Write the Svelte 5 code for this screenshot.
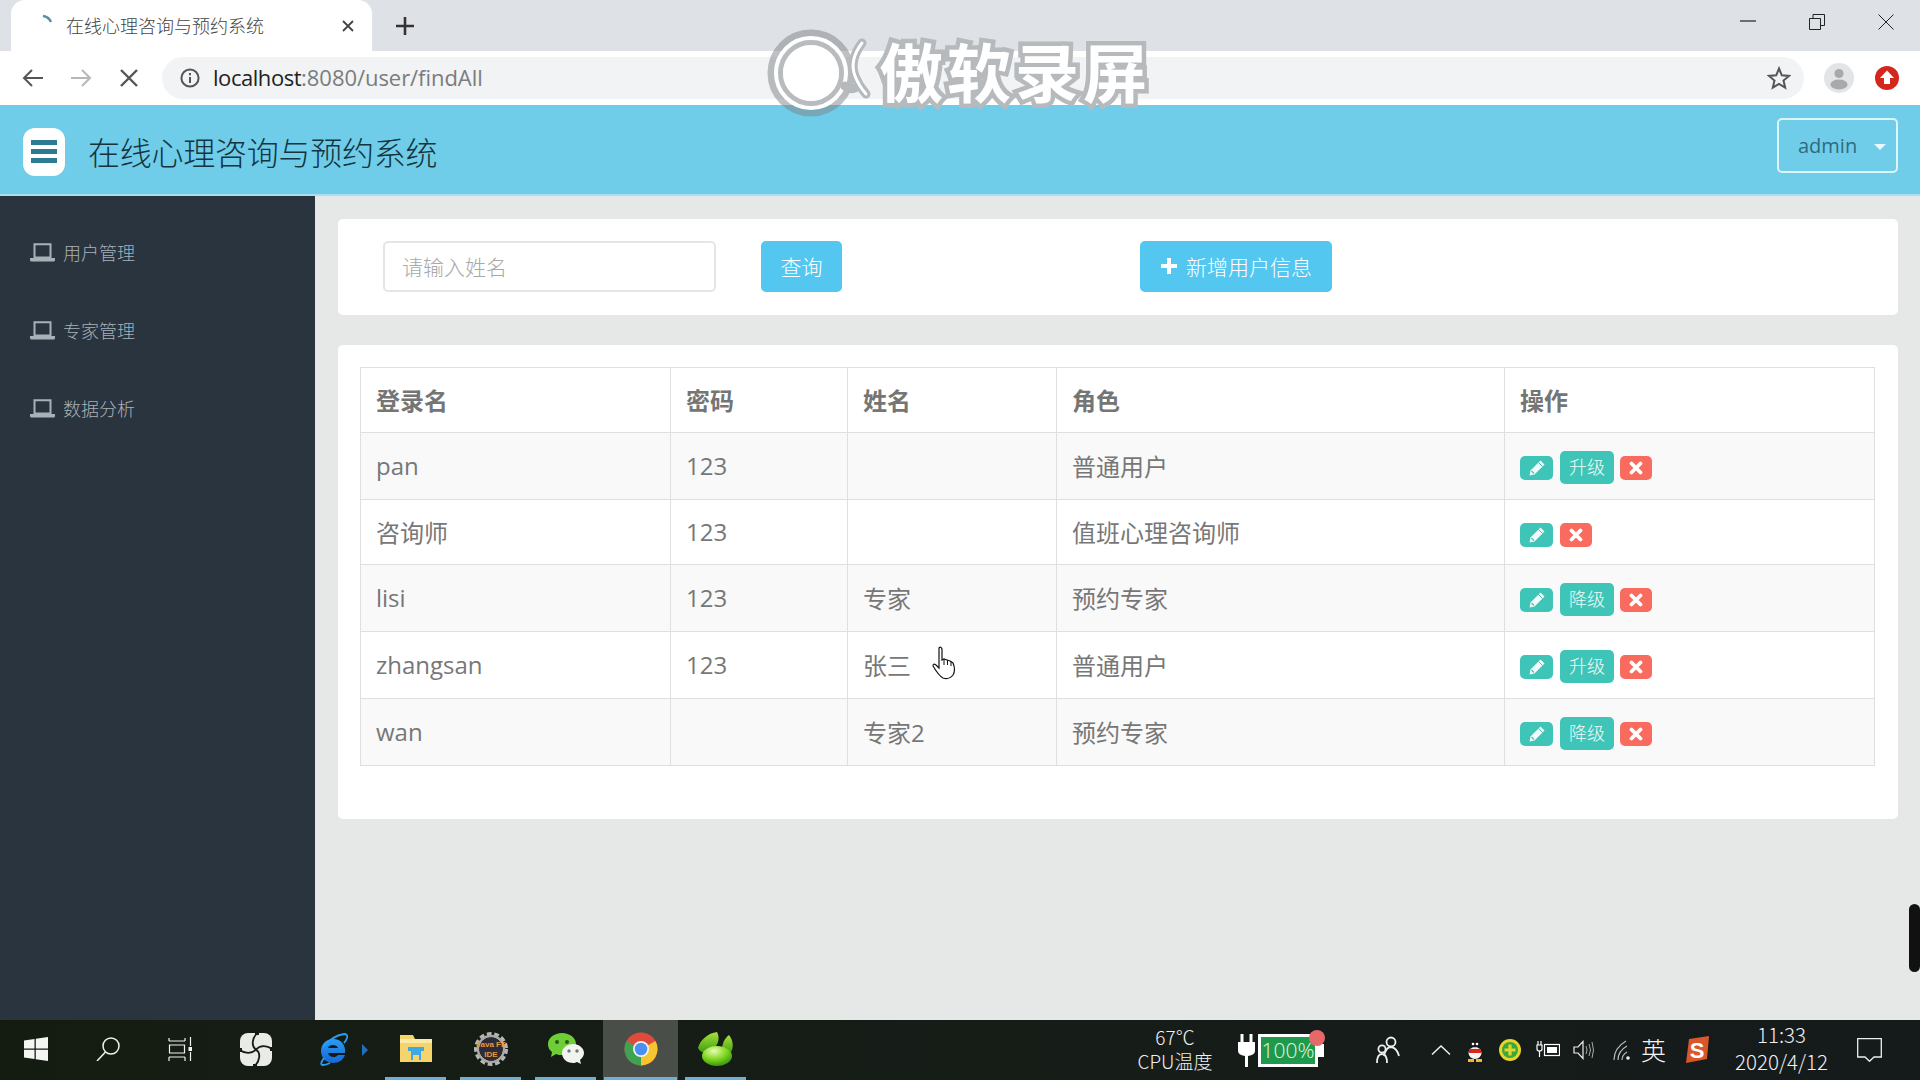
<script>
  const menu = ['用户管理', '专家管理', '数据分析'];
  const rows = [
    { login: 'pan', pwd: '123', name: '', role: '普通用户', action: '升级', tall: true },
    { login: '咨询师', pwd: '123', name: '', role: '值班心理咨询师', action: '', tall: false },
    { login: 'lisi', pwd: '123', name: '专家', role: '预约专家', action: '降级', tall: true },
    { login: 'zhangsan', pwd: '123', name: '张三', role: '普通用户', action: '升级', tall: true },
    { login: 'wan', pwd: '', name: '专家2', role: '预约专家', action: '降级', tall: true }
  ];
</script>

<div class="screen">
  <div class="tabbar">
    <div class="tab">
      <svg class="spin" width="18" height="18" viewBox="0 0 18 18"><path d="M3 2 A10 10 0 0 1 11 8" fill="none" stroke="#5a8f9c" stroke-width="2.4"/></svg>
      <span class="tabtitle">在线心理咨询与预约系统</span>
      <svg class="tabx" width="14" height="14" viewBox="0 0 14 14"><path d="M2 2L12 12M12 2L2 12" stroke="#444" stroke-width="1.8"/></svg>
    </div>
    <svg class="plus" width="20" height="20" viewBox="0 0 20 20"><path d="M10 1V19M1 10H19" stroke="#333" stroke-width="2.6"/></svg>
    <div class="winctl">
      <svg width="16" height="16" viewBox="0 0 16 16"><path d="M0 7H16" stroke="#222" stroke-width="1.2"/></svg>
      <svg width="16" height="16" viewBox="0 0 16 16"><path d="M.5 4.5H11.5V15.5H.5ZM4 4.5V.5H15.5V11.5H11.5" fill="none" stroke="#222" stroke-width="1"/></svg>
      <svg width="16" height="16" viewBox="0 0 16 16"><path d="M.5 .5L15.5 15.5M15.5 .5L.5 15.5" stroke="#222" stroke-width="1"/></svg>
    </div>
  </div>

  <div class="toolbar">
    <svg class="nav" width="22" height="20" viewBox="0 0 22 20"><path d="M21 10H2M10 2L2 10L10 18" fill="none" stroke="#555" stroke-width="2"/></svg>
    <svg class="nav" width="22" height="20" viewBox="0 0 22 20"><path d="M1 10H20M12 2L20 10L12 18" fill="none" stroke="#b5b7ba" stroke-width="2"/></svg>
    <svg class="nav" width="20" height="20" viewBox="0 0 20 20"><path d="M2 2L18 18M18 2L2 18" stroke="#555" stroke-width="2.4"/></svg>
    <div class="omni">
      <svg width="20" height="20" viewBox="0 0 20 20"><circle cx="10" cy="10" r="8.6" fill="none" stroke="#555" stroke-width="2"/><path d="M10 9V15M10 5V7.2" stroke="#555" stroke-width="2"/></svg>
      <span class="url"><b>localhost</b>:8080/user/findAll</span>
      <svg class="star" width="24" height="24" viewBox="0 0 24 24"><path d="M12 2.5L14.8 9.3L22 9.9L16.5 14.6L18.2 21.6L12 17.9L5.8 21.6L7.5 14.6L2 9.9L9.2 9.3Z" fill="none" stroke="#555" stroke-width="2"/></svg>
    </div>
    <svg class="avatar" width="30" height="30" viewBox="0 0 30 30"><circle cx="15" cy="15" r="15" fill="#e3e4e6"/><circle cx="15" cy="10.5" r="4.6" fill="#a8a9ab"/><ellipse cx="15" cy="21.5" rx="8.5" ry="5" fill="#a8a9ab"/></svg>
    <svg class="update" width="24" height="24" viewBox="0 0 24 24"><circle cx="12" cy="12" r="12" fill="#d5261e"/><path d="M12 4.5L19 12H15V18H9V12H5Z" fill="#fff"/></svg>
  </div>

  <header class="header">
    <div class="burger"><i></i><i></i><i></i></div>
    <h1>在线心理咨询与预约系统</h1>
    <div class="admin"><span>admin</span><em></em></div>
  </header>

  <div class="body">
    <aside class="side">
      {#each menu as m}
        <div class="mi">
          <svg width="25" height="22" viewBox="0 0 25 22"><path d="M4.5 3.2H20.5V16.5H4.5Z" fill="none" stroke="#a9b1b8" stroke-width="2"/><path d="M0 17H25V19Q25 20.5 23.500 20.500H1.500Q0 20.500 0 19Z" fill="#a9b1b8"/></svg>
          <span>{m}</span>
        </div>
      {/each}
    </aside>
    <main class="main">
      <section class="card search">
        <div class="input">请输入姓名</div>
        <button class="b query">查询</button>
        <button class="b add"><svg width="18" height="18" viewBox="0 0 18 18"><path d="M9 1V17M1 9H17" stroke="#fff" stroke-width="4"/></svg>新增用户信息</button>
      </section>
      <section class="card list">
        <table>
          <colgroup><col class="c1"/><col class="c2"/><col class="c3"/><col class="c4"/><col class="c5"/></colgroup>
          <thead><tr><th>登录名</th><th>密码</th><th>姓名</th><th>角色</th><th>操作</th></tr></thead>
          <tbody>
            {#each rows as r}
              <tr class:tall={r.tall}>
                <td>{r.login}</td><td>{r.pwd}</td><td>{r.name}</td><td>{r.role}</td>
                <td class="opcell">
                  <div class="ops">
                    <span class="op edit"><svg width="18" height="18" viewBox="0 0 18 18"><path d="M12.500 1.500L16.500 5.500L6.500 15.500L1.500 16.500L2.500 11.500Z" fill="#f2fbfa"/><path d="M3.500 12L6 14.500" stroke="#3fc5b8" stroke-width="1.200"/><path d="M10.500 3.500L14.500 7.500" stroke="#3fc5b8" stroke-width="1"/></svg></span>
                    {#if r.action}<span class="op act">{r.action}</span>{/if}
                    <span class="op del"><svg width="14" height="14" viewBox="0 0 14 14"><path d="M2.500 2.500L11.500 11.500M11.500 2.500L2.500 11.500" stroke="#fff" stroke-width="3.800" stroke-linecap="round"/></svg></span>
                  </div>
                </td>
              </tr>
            {/each}
          </tbody>
        </table>
      </section>
    </main>
  </div>

  <footer class="taskbar">
    <div class="tb-left">
      <div class="slot s72"><svg width="24" height="24" viewBox="0 0 24 24"><path d="M0 3.500L10.500 2V11.500H0ZM11.800 1.800L24 0V11.500H11.800ZM0 12.700H10.500V22L0 20.500ZM11.800 12.700H24V24L11.800 22.200Z" fill="#f4f6f4"/></svg></div>
      <div class="slot s72"><svg width="24" height="24" viewBox="0 0 24 24"><circle cx="15" cy="9" r="8" fill="none" stroke="#f0f2f0" stroke-width="1.500"/><path d="M9.500 15L1 24" stroke="#f0f2f0" stroke-width="1.500"/></svg></div>
      <div class="slot s72"><svg width="24" height="24" viewBox="0 0 24 24"><path d="M1 4H17M1 1V4M17 1V4M1 20H17M1 20V24M17 20V24M1.500 8H16.500V16H1.500ZM22.500 0V9M22.500 15V24" fill="none" stroke="#f0f2f0" stroke-width="1.200"/><rect x="20.500" y="10" width="4" height="4" fill="#f0f2f0"/></svg></div>
      <div class="slot s80"><svg width="32" height="33" viewBox="0 0 32 33"><rect x="0" y="0" width="32" height="33" rx="8" fill="#e8ebe6"/><path d="M16 16.500C11 13 12 6 17 0M16 16.500C20 12 27 12 32 16M16 16.500C21 20 20 27 15 33M16 16.500C12 21 5 21 0 17" fill="none" stroke="#141c14" stroke-width="1.800"/><path d="M15 0H19V2H15ZM0 15H2V19H0ZM30 14H32V18H30ZM13 31H17V33H13Z" fill="#141c14"/></svg></div>
      <div class="slot s82">
        <svg class="ie" width="30" height="34" viewBox="0 0 30 34"><defs><linearGradient id="ieg" x1="0" y1="0" x2="0" y2="1"><stop offset="0" stop-color="#2b9cf4"/><stop offset="1" stop-color="#1468d8"/></linearGradient></defs><path d="M15 7C8 7 3 12 3 19C3 26 8 31 15 31C21 31 25 28 27 23H20C18 26 11 26 10 21H27C28 13 23 7 15 7ZM10 16C11 12 19 12 20 16Z" fill="url(#ieg)"/><path d="M5 15Q14 4 26 2Q30 2 29 6Q28 9 26 11" fill="none" stroke="#2b9cf4" stroke-width="1.800"/><path d="M6 26Q1 33 5 33Q8 33 12 31" fill="none" stroke="#2b9cf4" stroke-width="1.800"/></svg>
        <svg class="iearrow" width="6" height="12" viewBox="0 0 6 12"><path d="M0 0L6 6L0 12Z" fill="#1d6fc0"/></svg>
      </div>
      <div class="slot s75 run"><svg width="32" height="30" viewBox="0 0 32 30"><path d="M0 1H13L15 5H32V28H0Z" fill="#f4d46b"/><path d="M0 5H32V9H0Z" fill="#fbe9a5"/><path d="M8 13H24V17H21V26H11V17H8Z" fill="#3fa8e0"/><path d="M13 21H19V27H13Z" fill="#f4d46b"/></svg></div>
      <div class="slot s75 run"><svg class="java" width="34" height="34" viewBox="0 0 34 34"><circle cx="17" cy="17" r="14.500" fill="none" stroke="#b6b7b4" stroke-width="5" stroke-dasharray="4.500 2.600"/><circle cx="17" cy="17" r="13" fill="none" stroke="#a8a9a6" stroke-width="2.500"/><circle cx="17" cy="17" r="11.500" fill="#2e2b38"/><text x="17" y="15" text-anchor="middle" class="jt">Java FF</text><text x="17" y="25" text-anchor="middle" class="jt">IDE</text></svg></div>
      <div class="slot s75 run"><svg width="36" height="32" viewBox="0 0 36 32"><path d="M14 0C22 0 28 5 28 11C28 18 22 22 14 22C12 22 10 22 8 21L3 24L4 19C1 17 0 14 0 11C0 5 6 0 14 0Z" fill="#6fce38"/><circle cx="9" cy="9" r="2" fill="#2c5c17"/><circle cx="19" cy="9" r="2" fill="#2c5c17"/><path d="M25 11C31 11 36 15 36 20C36 23 34 25 32 27L33 31L29 29C27 30 26 30 25 30C19 30 14 26 14 20C14 15 19 11 25 11Z" fill="#f2f4f1"/><circle cx="21" cy="18" r="1.700" fill="#777"/><circle cx="29" cy="18" r="1.700" fill="#777"/></svg></div>
      <div class="slot s75 run active"><svg width="34" height="34" viewBox="0 0 34 34"><circle cx="17" cy="17" r="16.500" fill="#e04a3c"/><path d="M17 17L31.500 9A16.500 16.500 0 0 1 17 33.500Z" fill="#f6c631"/><path d="M17 17L17 33.500A16.500 16.500 0 0 1 2.500 9Z" fill="#3da350"/><circle cx="17" cy="17" r="8" fill="#f4f4f4"/><circle cx="17" cy="17" r="6.300" fill="#4b8ff0"/></svg></div>
      <div class="slot s75 run"><svg width="36" height="34" viewBox="0 0 36 34"><defs><linearGradient id="lf" x1="0" y1="0" x2="0" y2="1"><stop offset="0" stop-color="#a9e23a"/><stop offset="1" stop-color="#3f9e10"/></linearGradient><radialGradient id="ball" cx=".4" cy=".25" r=".8"><stop offset="0" stop-color="#e8fbb4"/><stop offset=".5" stop-color="#86d924"/><stop offset="1" stop-color="#2e8f0a"/></radialGradient></defs><path d="M0 16C2 8 10 1 19 0C22 5 21 13 14 18C9 21 3 22 0 16Z" fill="url(#lf)"/><path d="M24 18C24 11 27 6 31 3C35 8 36 15 33 20C30 23 25 22 24 18Z" fill="url(#lf)"/><ellipse cx="19" cy="24" rx="15" ry="10" fill="url(#ball)"/></svg></div>
    </div>
    <div class="tb-right">
      <div class="cpu"><span>67℃</span><span>CPU温度</span></div>
      <div class="batt">
        <svg width="17" height="33" viewBox="0 0 17 33"><path d="M2.500 0H5.500V8H11.500V0H14.500V8H17V17Q17 21 10 22V33H7V22Q0 21 0 17V8H2.500Z" fill="#fff"/></svg>
        <div class="battbox"><span>100%</span></div>
        <i class="dot"></i>
      </div>
      <svg class="person" width="24" height="28" viewBox="0 0 24 28"><circle cx="15" cy="6" r="4.500" fill="none" stroke="#eee" stroke-width="1.800"/><path d="M8 20Q10 11 15 11Q21 12 23 20" fill="none" stroke="#eee" stroke-width="1.800"/><circle cx="6" cy="13" r="3.600" fill="none" stroke="#eee" stroke-width="1.800"/><path d="M1 27Q1 18 6 18Q11 18 11 27" fill="none" stroke="#eee" stroke-width="1.800"/></svg>
      <div class="tray">
        <svg width="20" height="12" viewBox="0 0 20 12"><path d="M1 10.500L10 2L19 10.500" fill="none" stroke="#f4f4f4" stroke-width="1.400"/></svg>
        <svg width="18" height="24" viewBox="0 0 18 24"><ellipse cx="9" cy="8" rx="5.500" ry="7.500" fill="#17181a"/><ellipse cx="9" cy="15" rx="6.500" ry="6" fill="#f4f4f0"/><path d="M3 11H15V15H3Z" fill="#d8261f"/><circle cx="7" cy="6" r="1.300" fill="#fff"/><circle cx="11" cy="6" r="1.300" fill="#fff"/><path d="M7 9H11L9 10.500Z" fill="#f3b531"/><path d="M2 21H8V24H2ZM10 21H16V24H10Z" fill="#f3b531"/></svg>
        <svg width="22" height="22" viewBox="0 0 22 22"><circle cx="11" cy="11" r="11" fill="#e8d42d"/><circle cx="11" cy="11" r="8" fill="#39a83a"/><path d="M11 5.500V16.500M5.500 11H16.500" stroke="#e8d42d" stroke-width="3.200"/></svg>
        <svg width="24" height="18" viewBox="0 0 24 18"><path d="M2 0V4M5 0V4M1 4H6V8Q6 10 3.500 10Q1 10 1 8ZM3.500 10V16" fill="none" stroke="#fff" stroke-width="1.200"/><rect x="8.500" y="3.500" width="15" height="11" fill="none" stroke="#fff" stroke-width="1.200"/><rect x="11" y="6" width="10" height="6" fill="#fff"/></svg>
        <svg class="spk" width="22" height="20" viewBox="0 0 22 20"><path d="M1 7H5L10 1.500V18.500L5 13H1Z" fill="none" stroke="#eee" stroke-width="1.200"/><path d="M13 6Q15 10 13 14M16 4Q19 10 16 16M19 2Q22 10 19 18" fill="none" stroke="#aaa" stroke-width="1"/></svg>
        <svg class="wifi" width="22" height="22" viewBox="0 0 22 22"><path d="M2 21Q2 9 14 2M6 21Q6 12 15 7M10 21Q10 16 15 13" fill="none" stroke="#bbb" stroke-width="1.200"/><circle cx="16" cy="19" r="1.800" fill="#eee"/></svg>
        <span class="lang">英</span>
        <svg class="sogou" width="26" height="28" viewBox="0 0 26 28"><path d="M5 3L25 0L23 23L2 27Z" fill="#d9572b"/><text x="13" y="22" text-anchor="middle" class="st">S</text></svg>
      </div>
      <div class="clock"><span>11:33</span><span>2020/4/12</span></div>
      <svg class="notif" width="25" height="24" viewBox="0 0 25 24"><path d="M.7 .7H24.300V19H17L12.500 23.300L8 19H.7Z" fill="none" stroke="#eee" stroke-width="1.300"/></svg>
    </div>
  </footer>

  <div class="watermark" aria-hidden="true">
    <svg width="110" height="96" viewBox="0 0 110 96">
      <circle cx="44" cy="45" r="40" fill="none" stroke="#7d8388" stroke-opacity=".5" stroke-width="7"/>
      <circle cx="44" cy="45" r="35" fill="none" stroke="#fff" stroke-width="4"/>
      <circle cx="44" cy="45" r="30.500" fill="none" stroke="#b9bcbe" stroke-width="5"/>
      <circle cx="44" cy="45" r="28" fill="#fff"/>
      <path d="M78 58Q84 62 88 60M95 15Q82 32 88 48Q92 58 99 66" fill="none" stroke="#b5b9bc" stroke-width="9" stroke-linecap="round"/>
      <path d="M95 15Q82 32 88 48Q92 58 99 66" fill="none" stroke="#fff" stroke-width="3" stroke-linecap="round"/>
    </svg>
    <span>傲软录屏</span>
  </div>

  <svg class="cursor" width="28" height="34" viewBox="0 0 28 34"><path d="M8 2Q10 0 11 3V14L13 13L16 14L19 15L22 17Q25 24 22 29Q18 34 12 32Q8 30 2 20Q2 17 5 19L8 22Z" fill="#fff" stroke="#111" stroke-width="1.200"/><path d="M13 13V19M16.500 14V19M20 15.500V20" stroke="#111" stroke-width="1"/></svg>
  <i class="pill"></i>
</div>

<style>
  :global(body) { margin: 0; background: #e6e8e8; }
  .screen {
    position: relative; width: 1920px; height: 1080px; overflow: hidden;
    display: flex; flex-direction: column;
    font-family: "Open Sans", "Noto Sans CJK SC", sans-serif; color: #777;
  }
  .tabbar { height: 51px; background: #dee1e6; display: flex; align-items: flex-end; padding-left: 11px; box-sizing: border-box; flex: none; }
  .tab { width: 361px; height: 51px; background: #fff; border-radius: 14px 14px 0 0; display: flex; align-items: center; box-sizing: border-box; padding: 0 17px 0 29px; }
  .spin { flex: none; margin-top: -6px; }
  .tabtitle { margin: -2px 0 0 8px; font: 300 18px "Noto Sans CJK SC", sans-serif; color: #444; flex: 1; }
  .plus { margin: 0 0 15px 23px; }
  .winctl { margin-left: auto; align-self: flex-start; padding: 14px 26px 0 0; display: flex; gap: 53px; }
  .toolbar { height: 54px; background: #fff; display: flex; align-items: center; flex: none; box-sizing: border-box; padding-left: 22px; }
  .nav { margin-right: 26px; flex: none; }
  .nav:nth-child(3) { margin-left: 1px; margin-right: 23px; }
  .omni { width: 1642px; height: 42px; background: #f1f3f4; border-radius: 21px; display: flex; align-items: center; padding: 0 13px 0 17px; box-sizing: border-box; flex: none; }
  .omni svg:first-child { margin-left: 1px; }
  .url { margin: -2px 0 0 13px; font: 22px "Open Sans", sans-serif; color: #7a7c80; letter-spacing: -.05px; white-space: nowrap; }
  .url b { font-weight: 400; color: #222; letter-spacing: -.45px; }
  .star { margin-left: auto; }
  .avatar { margin-left: 20px; flex: none; }
  .update { margin-left: 21px; flex: none; }
  .header { height: 91px; background: #6fcde9; border-bottom: 2px solid #a8e0f0; box-sizing: border-box; display: flex; align-items: center; flex: none; padding: 0 22px 0 23px; }
  .burger { width: 42px; height: 48px; background: #fff; border-radius: 12px; display: flex; flex-direction: column; align-items: center; justify-content: center; gap: 4.500px; margin-top: 4px; }
  .burger i { width: 26px; height: 4.500px; background: #2b7c92; display: block; }
  h1 { margin: 2px 0 0 23px; font: 300 32px "Noto Sans CJK SC", sans-serif; color: #143540; letter-spacing: -.25px; }
  .admin { margin-left: auto; width: 121px; height: 55px; margin-top: -9px; border: 2px solid #dcf6fc; border-radius: 5px; box-sizing: border-box; display: flex; align-items: center; padding-left: 19px; font-size: 20px; color: #2f6b80; }
  .admin em { margin-left: 17px; border-left: 6px solid transparent; border-right: 6px solid transparent; border-top: 6px solid #e8f9fd; margin-top: 3px; }
  .body { flex: 1; display: flex; min-height: 0; }
  .side { width: 315px; background: #29343f; flex: none; padding-top: 17px; box-sizing: border-box; }
  .mi { height: 78px; display: flex; align-items: center; padding-left: 30px; }
  .mi span { margin-left: 8px; font: 300 18px "Noto Sans CJK SC", sans-serif; color: #aab1b7; }
  .main { flex: 1; padding: 23px 23px 0 23px; background: #e6e8e8; display: flex; flex-direction: column; gap: 30px; }
  .card { background: #fff; border-radius: 5px; box-sizing: border-box; }
  .search { height: 96px; display: flex; align-items: center; padding: 0 0 2px 45px; }
  .input { width: 333px; height: 51px; border: 2px solid #e4e6e6; border-radius: 5px; box-sizing: border-box; padding: 0 0 1px 17px; display: flex; align-items: center; font: 300 21px "Noto Sans CJK SC", sans-serif; color: #a8a8a8; }
  .b { height: 51px; border: 0; border-radius: 5px; background: #54c7f0; color: #fff; font: 300 21px "Noto Sans CJK SC", sans-serif; padding: 0; display: flex; align-items: center; justify-content: center; }
  .query { width: 81px; margin-left: 45px; }
  .add { width: 192px; margin-left: 298px; gap: 8px; }
  .list { height: 474px; padding: 22px 23px 0 22px; }
  table { width: 1514px; border-collapse: collapse; table-layout: fixed; font-size: 24px; color: #777; }
  .c1 { width: 310px; } .c2 { width: 177px; } .c3 { width: 209px; } .c4 { width: 448px; } .c5 { width: 370px; }
  th, td { border: 1px solid #dedfdf; padding: 0 0 2px 15px; text-align: left; height: 65px; box-sizing: border-box; font-family: "Open Sans", "Noto Sans CJK SC", sans-serif; font-weight: 400; }
  .opcell { padding-bottom: 0; }
  th { font-weight: 700; font-size: 24px; color: #757575; }
  tr.tall td { height: 67px; }
  tbody tr:nth-child(odd) td { background: #f9f9f9; }
  .ops { display: flex; align-items: center; gap: 7px; padding-top: 5px; }
  tr.tall .ops { padding-top: 3px; }
  .op { display: flex; align-items: center; justify-content: center; border-radius: 5px; color: #fff; }
  .edit { width: 33px; height: 24px; background: #3fc5b8; }
  .act { width: 54px; height: 33px; background: #3fc5b8; font: 300 18px "Noto Sans CJK SC", sans-serif; color: #eefbf9; margin-right: -1px; box-sizing: border-box; padding-bottom: 3px; }
  .del { width: 32px; height: 24px; background: #f96b5e; }
  .taskbar { height: 60px; background: linear-gradient(90deg, #141c12, #161d18 55%, #151a1b); flex: none; display: flex; color: #eee; position: relative; }
  .tb-left { display: flex; width: 753px; flex: none; }
  .slot { height: 60px; display: flex; align-items: center; justify-content: center; position: relative; box-sizing: border-box; flex: none; padding-bottom: 2px; }
  .s72 { width: 72px; } .s80 { width: 80px; } .s82 { width: 82px; } .s75 { width: 75px; }
  .s82 svg.ie { margin-left: -8px; }
  .iearrow { position: absolute; left: 66px; top: 24px; }
  .run::after { content: ""; position: absolute; left: 7px; right: 7px; bottom: 0; height: 3px; background: #6fb0d2; }
  .active { background: #494e49; }
  .active::after { left: 1px; right: 1px; }
  .jt { font: 700 8px "Liberation Sans", sans-serif; fill: #e39a3a; }
  .st { font: 700 22px "Liberation Sans", sans-serif; fill: #fff; }
  .tb-right { flex: 1; display: flex; align-items: center; padding-left: 386px; }
  .cpu, .clock { display: flex; flex-direction: column; align-items: center; font: 300 19px/24px "Noto Sans CJK SC", "Open Sans", sans-serif; color: #f0f0f0; white-space: nowrap; }
  .cpu { width: 72px; margin-top: -2px; }
  .batt { display: flex; align-items: center; margin-left: 27px; width: 83px; position: relative; }
  .battbox { width: 60px; height: 33px; margin-left: 3px; border: 3px solid #fff; background: #1f9a4c; box-sizing: border-box; display: flex; align-items: center; justify-content: center; font: 300 21px "Open Sans", sans-serif; color: #e8f5e8; position: relative; }
  .battbox::after { content: ""; position: absolute; right: -9px; top: 7px; width: 6px; height: 13px; background: #fff; }
  .dot { position: absolute; left: 71px; top: -4px; width: 16px; height: 16px; border-radius: 50%; background: #e8686a; }
  .person { margin-left: 55px; flex: none; }
  .tray { display: flex; align-items: center; gap: 15px; margin-left: 31px; }
  .spk { margin-left: -2px; }
  .wifi { margin-left: 1.500px; }
  .lang { font: 300 25px "Noto Sans CJK SC", sans-serif; color: #f4f4f4; margin: -3px 0 0 -7.500px; }
  .sogou { margin-left: 2.500px; }
  .clock { width: 96px; margin: -4px 0 0 24px; font-size: 20.500px; line-height: 27px; }
  .notif { margin-left: 27px; flex: none; }
  .watermark { position: absolute; left: 767px; top: 28px; display: flex; align-items: flex-start; }
  .watermark span { font: 700 64px/64px "Noto Sans CJK SC", sans-serif; color: #fff; -webkit-text-stroke: 9px #b7babd; paint-order: stroke fill; letter-spacing: 4px; margin: 9px 0 0 2px; }
  .cursor { position: absolute; left: 931px; top: 646px; }
  .pill { position: absolute; left: 1909px; top: 904px; width: 11px; height: 68px; border-radius: 6px; background: #111; }
</style>
